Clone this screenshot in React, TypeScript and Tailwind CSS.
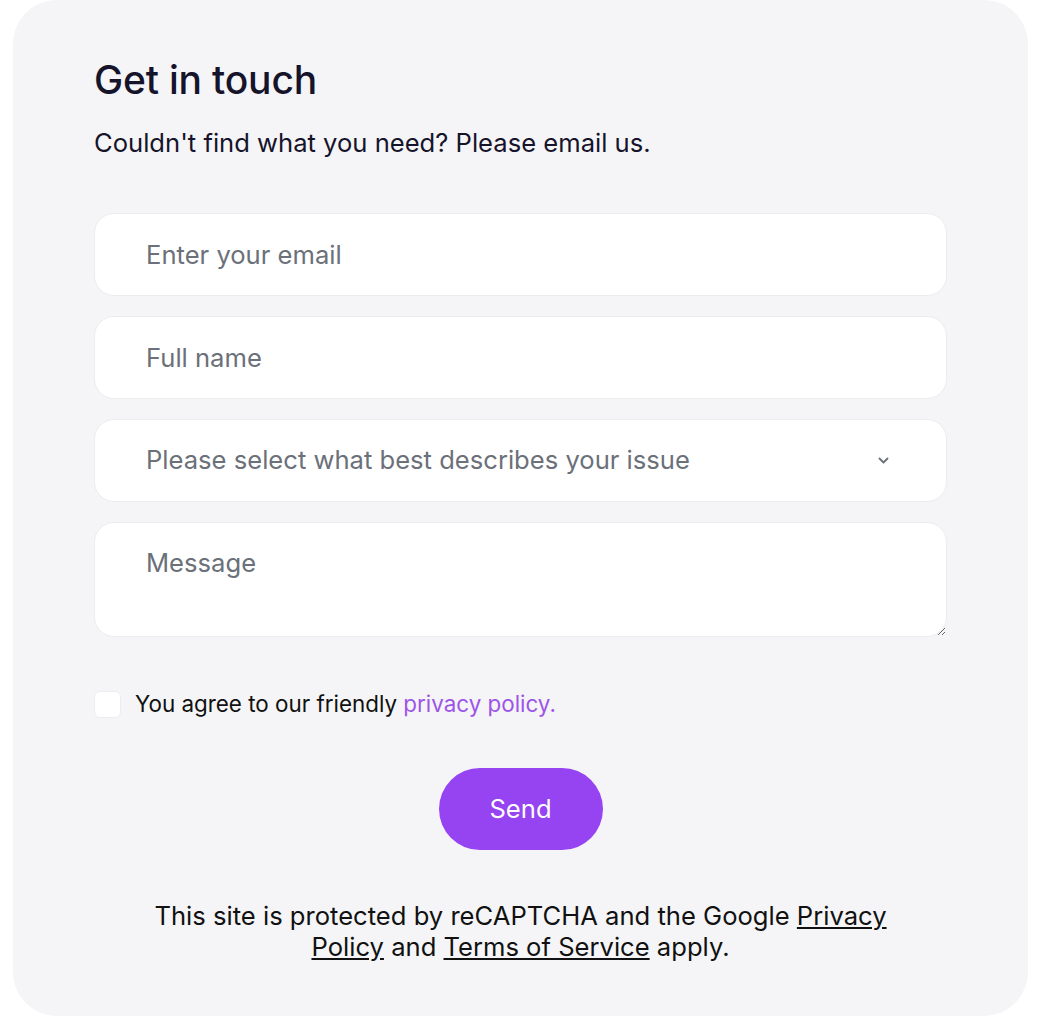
import React from 'react';

export default function App() {
  return (
    <div className="min-h-screen bg-white" style={{ fontFamily: 'Inter, "Noto Sans", sans-serif' }}>
      <div className="ml-[13px] w-[1015px] bg-[#f5f5f7] rounded-[44px] px-[81px] pt-[58px] h-[1016px]">
        <h1 className="text-[39px] leading-[44px] font-medium text-[#15142b] tracking-[-0.005em]">Get in touch</h1>
        <p className="mt-[26px] text-[25.6px] leading-[30px] text-[#15142b]">Couldn't find what you need? Please email us.</p>

        <form className="mt-[55px] flex flex-col gap-[20px]" onSubmit={(e) => e.preventDefault()}>
          <input
            type="email"
            placeholder="Enter your email"
            className="h-[83px] w-full rounded-[20px] border border-[#ececee] bg-white pl-[51px] pr-6 text-[25.6px] text-[#15142b] placeholder:text-[#6b7079] outline-none"
          />
          <input
            type="text"
            placeholder="Full name"
            className="h-[83px] w-full rounded-[20px] border border-[#ececee] bg-white pl-[51px] pr-6 text-[25.6px] text-[#15142b] placeholder:text-[#6b7079] outline-none"
          />
          <div className="relative h-[83px] w-full rounded-[20px] border border-[#ececee] bg-white flex items-center pl-[51px] pr-6">
            <span className="text-[25.6px] text-[#6b7079]">Please select what best describes your issue</span>
            <svg className="absolute right-[57px] top-[37px]" width="11" height="7" viewBox="0 0 11 7" fill="none">
              <path d="M1.5 1.5l4 4 4-4" stroke="#6b7079" strokeWidth="1.8" strokeLinecap="round" strokeLinejoin="round" />
            </svg>
          </div>
          <textarea
            placeholder="Message"
            className="h-[115px] w-full rounded-[20px] border border-[#ececee] bg-white pl-[51px] pr-6 pt-[24px] text-[25.6px] leading-[32px] text-[#15142b] placeholder:text-[#6b7079] outline-none resize-y"
          />

          <label className="mt-[32px] flex items-center gap-[14px]">
            <span className="w-[27px] h-[27px] rounded-[6px] bg-white border border-[#ececee]" />
            <span className="text-[22.4px] leading-[30px] text-[#111]">
              You agree to our friendly <span className="text-[#9d55e8]">privacy policy.</span>
            </span>
          </label>

          <div className="mt-[29px] flex justify-center">
            <button type="submit" className="w-[164px] h-[82px] rounded-full bg-[#9643f2] text-white text-[25.6px]">Send</button>
          </div>
        </form>

        <p className="mt-[50px] text-center text-[25.6px] leading-[31px] text-[#111] px-[50px]">
          This site is protected by reCAPTCHA and the Google <a className="underline" href="#">Privacy Policy</a> and{' '}
          <a className="underline" href="#">Terms of Service</a> apply.
        </p>
      </div>
    </div>
  );
}
